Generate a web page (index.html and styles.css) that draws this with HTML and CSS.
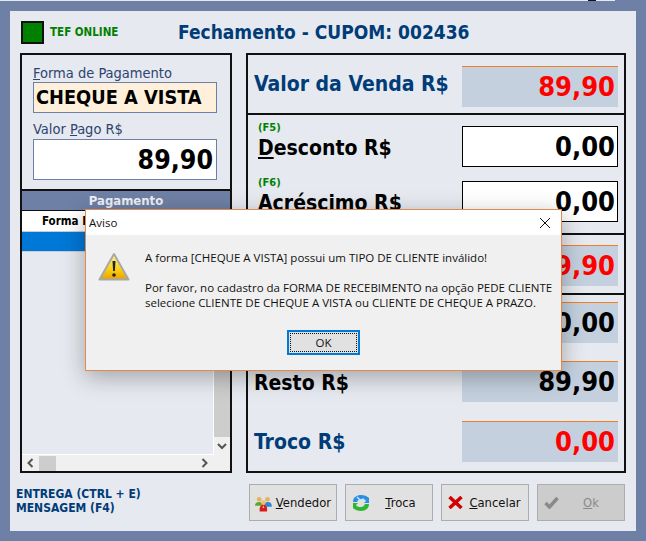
FILE: index.html
```html
<!DOCTYPE html>
<html lang="pt-BR">
<head>
    <meta charset="utf-8">
    <title>Fechamento</title>
    <link rel="stylesheet" href="styles.css">
</head>
<body>
<div class="strip"><span class="strip-mark"></span></div>
<div class="window">
    <header class="top">
        <span class="led"></span>
        <span class="tef">TEF ONLINE</span>
        <span class="title">Fechamento - CUPOM: 002436</span>
    </header>

    <main class="main">
        <section class="left">
            <div class="form">
                <label class="lbl"><u>F</u>orma de Pagamento</label>
                <div class="input-forma">CHEQUE A VISTA</div>
                <label class="lbl lbl-pago">Valor <u>P</u>ago R$</label>
                <div class="input-pago">89,90</div>
            </div>
            <div class="grid-title">Pagamento</div>
            <div class="grid">
                <div class="grid-body">
                    <div class="grid-head">Forma P</div>
                    <div class="grid-sel"></div>
                </div>
                <div class="vbar">
                    <span class="vthumb"></span>
                    <svg class="arrow" width="10" height="8" viewBox="0 0 10 8"><path d="M1 2l4 4 4-4" fill="none" stroke="#555" stroke-width="2"/></svg>
                </div>
                <div class="hbar">
                    <svg class="arrow" width="8" height="10" viewBox="0 0 8 10"><path d="M6.500 1l-4 4 4 4" fill="none" stroke="#555" stroke-width="2"/></svg>
                    <span class="hthumb"></span>
                    <svg class="arrow arrow-right" width="8" height="10" viewBox="0 0 8 10"><path d="M1.500 1l4 4-4 4" fill="none" stroke="#555" stroke-width="2"/></svg>
                </div>
            </div>
        </section>

        <section class="right">
            <div class="block block-venda">
                <div class="row">
                    <span class="name name-blue">Valor da Venda R$</span>
                    <span class="val val-red">89,90</span>
                </div>
            </div>
            <div class="block block-desc">
                <div class="row">
                    <div class="name-wrap"><small>(F5)</small><span class="name"><u>D</u>esconto R$</span></div>
                    <span class="val val-white">0,00</span>
                </div>
                <div class="row">
                    <div class="name-wrap"><small>(F6)</small><span class="name">Acréscimo R$</span></div>
                    <span class="val val-white">0,00</span>
                </div>
            </div>
            <div class="block block-total">
                <div class="row">
                    <span class="name name-blue"></span>
                    <span class="val val-red">89,90</span>
                </div>
            </div>
            <div class="block block-resto">
                <div class="row">
                    <span class="name"></span>
                    <span class="val">0,00</span>
                </div>
                <div class="row">
                    <span class="name name-low">Resto R$</span>
                    <span class="val">89,90</span>
                </div>
                <div class="row row-troco">
                    <span class="name name-blue">Troco R$</span>
                    <span class="val val-red">0,00</span>
                </div>
            </div>
        </section>
    </main>

    <footer class="bottom">
        <div class="hints">ENTREGA (CTRL + E)<br>MENSAGEM (F4)</div>
        <div class="buttons">
            <button class="btn btn-vend">
                <svg width="18" height="18" viewBox="0 0 18 18">
                    <circle cx="4.500" cy="5" r="2.500" fill="#e8b060"/>
                    <path d="M0 12c0-3 2-4 4.500-4S8 9 8 11v1H0z" fill="#5aa832"/>
                    <circle cx="13.500" cy="5" r="2.500" fill="#e8b060"/>
                    <path d="M10 11c0-2 1-3 3.500-3S18 9 18 12v1h-8z" fill="#2f86d8"/>
                    <circle cx="9" cy="8.500" r="2.500" fill="#f0c070"/>
                    <path d="M5 18v-3c0-2 2-4 4-4s4 2 4 4v3z" fill="#d81c1c"/>
                    <path d="M9 11.500l-1 3h2z" fill="#ffd24a"/>
                </svg>
                <span><u>V</u>endedor</span>
            </button>
            <button class="btn btn-spread">
                <svg width="18" height="18" viewBox="0 0 18 18">
                    <path d="M1 8c0-5 4-7 8-7 3 0 6 1 8 3v5h-5l2-2c-1-2-3-2-5-2-2 0-3 1-4 3z" fill="#2a8fe0"/>
                    <path d="M5 3l3 3 4-1" fill="none" stroke="#bfe4ff" stroke-width="1.500"/>
                    <path d="M17 10c0 5-4 7-8 7-3 0-6-1-8-3V9h5l-2 2c1 2 3 2 5 2 2 0 3-1 4-3z" fill="#2fb52f"/>
                </svg>
                <span class="btn-text"><u>T</u>roca</span>
            </button>
            <button class="btn btn-spread">
                <svg width="15" height="13" viewBox="0 0 15 13"><path d="M1.500 1l12 11M13.500 1l-12 11" stroke="#d40000" stroke-width="3.500" fill="none"/></svg>
                <span class="btn-text"><u>C</u>ancelar</span>
            </button>
            <button class="btn btn-spread btn-off">
                <svg width="15" height="13" viewBox="0 0 15 13"><path d="M1.500 7l4 4 8-9" stroke="#8a8a8a" stroke-width="3.500" fill="none"/></svg>
                <span class="btn-text"><u>O</u>k</span>
            </button>
        </div>
    </footer>
</div>

<div class="dialog">
    <div class="dlg-title">
        <span>Aviso</span>
        <svg width="12" height="12" viewBox="0 0 12 12"><path d="M1 1l10 10M11 1L1 11" stroke="#111" stroke-width="1" fill="none"/></svg>
    </div>
    <div class="dlg-body">
        <svg class="warn" width="32" height="30" viewBox="0 0 32 30">
            <defs>
                <linearGradient id="warnfill" x1="0" y1="0" x2="0" y2="1">
                    <stop offset="0" stop-color="#fff3a0"/>
                    <stop offset="0.6" stop-color="#fbcf10"/>
                    <stop offset="1" stop-color="#e8a200"/>
                </linearGradient>
            </defs>
            <path d="M16 2L30.500 27.500H1.500z" fill="url(#warnfill)" stroke="#a8a8a8" stroke-width="2" stroke-linejoin="round"/>
            <path d="M14.500 9h3l-.6 10h-1.800z" fill="#222"/>
            <circle cx="16" cy="23" r="1.800" fill="#222"/>
        </svg>
        <div class="dlg-text">
            <p>A forma [CHEQUE A VISTA] possui um TIPO DE CLIENTE inválido!</p>
            <p>Por favor, no cadastro da FORMA DE RECEBIMENTO na opção PEDE CLIENTE<br>selecione CLIENTE DE CHEQUE A VISTA ou CLIENTE DE CHEQUE A PRAZO.</p>
        </div>
    </div>
    <div class="dlg-foot"><button class="ok"><span>OK</span></button></div>
</div>
</body>
</html>
```

FILE: styles.css
```css
* {
    box-sizing: border-box;
}
html, body {
    margin: 0;
    height: 100%;
}
body {
    background-color: #6e80a5;
    font-family: "DejaVu Sans", Verdana, sans-serif;
    font-stretch: condensed;
    overflow: hidden;
    padding: 0 10px 10px;
}
/* sliver of the window behind, along the very top */
.strip {
    height: 1px;
    width: 615px;
    margin: 0 0 10px -10px;
    background-color: #e6e9ef;
    display: flex;
    justify-content: flex-end;
    padding-right: 19px;
}
.strip-mark {
    width: 8px;
    background-color: #111;
}
.window {
    width: 626px;
    height: 520px;
    background-color: #e6e9ef;
    display: flex;
    flex-direction: column;
}

/* top line */
.top {
    height: 42px;
    display: flex;
    align-items: center;
    padding: 0 0 0 11px;
}
.led {
    width: 23px;
    height: 23px;
    background-color: #008000;
    border: 2px solid #111;
}
.tef {
    margin-left: 6px;
    width: 128px;
    color: #008000;
    font-size: 11.5px;
    font-weight: bold;
}
.title {
    color: #003c78;
    font-size: 19px;
    font-weight: bold;
}

/* main boxes */
.main {
    display: flex;
    gap: 14px;
    padding: 0 10px;
    height: 420px;
}
.left {
    width: 212px;
    border: 2px solid #111;
    display: flex;
    flex-direction: column;
}
.form {
    height: 136px;
    padding: 10px 13px 0 11px;
    border-bottom: 2px solid #111;
    flex: none;
}
.lbl {
    display: block;
    font-family: "DejaVu Sans", sans-serif;
    font-size: 14.5px;
    color: #2c4470;
    line-height: 17px;
}
.lbl-pago {
    margin-top: 8px;
}
.input-forma {
    height: 31px;
    background-color: #fff0dc;
    border: 1px solid #6e80a5;
    font-size: 19.8px;
    font-weight: bold;
    line-height: 29px;
    padding-left: 2px;
    color: #000;
}
.input-pago {
    height: 41px;
    margin-top: 1px;
    background-color: #fff;
    border: 1px solid #6e80a5;
    font-size: 26.5px;
    font-weight: bold;
    line-height: 40px;
    text-align: right;
    padding-right: 3px;
}
.grid-title {
    height: 19px;
    flex: none;
    background-color: #6e80a5;
    color: #eef0f5;
    font-size: 13px;
    font-weight: bold;
    text-align: center;
    line-height: 19px;
}
.grid {
    flex: 1;
    display: grid;
    grid-template-columns: 1fr 16px;
    grid-template-rows: 1fr 16px;
    border-top: 1px solid #111;
}
.grid-body {
    border-right: 1px solid #fff;
    border-bottom: 1px solid #fff;
}
.grid-head {
    height: 21px;
    background-color: #fff;
    border-bottom: 1px solid #ccc;
    padding-left: 20px;
    font-size: 11.5px;
    font-weight: bold;
    line-height: 20px;
}
.grid-sel {
    height: 20px;
    background-color: #0078d7;
    border-bottom: 1px solid #ccc;
}
.vbar {
    background-color: #f0f0f0;
    display: flex;
    flex-direction: column;
    align-items: center;
}
.vthumb {
    width: 100%;
    flex: 1;
    margin-top: 17px;
    background-color: #cdcdcd;
}
.vbar .arrow {
    margin: 5px 0;
}
.hbar {
    grid-column: 1 / 3;
    background-color: #f0f0f0;
    display: flex;
    align-items: center;
    padding: 0 21px 0 4px;
}
.hthumb {
    width: 17px;
    height: 15px;
    margin-left: 5px;
    background-color: #cdcdcd;
}
.arrow-right {
    margin-left: auto;
}

.right {
    width: 380px;
    border: 2px solid #111;
    display: flex;
    flex-direction: column;
}
.block {
    border-bottom: 2px solid #111;
    padding: 0 6px;
    display: flex;
    flex-direction: column;
    flex: none;
}
.block:last-child {
    border-bottom: none;
}
.block-venda {
    height: 60px;
    padding-top: 11px;
}
.block-venda .name {
    margin-bottom: 5px;
}
.block-desc {
    height: 120px;
    padding-top: 11px;
    gap: 14px;
}
.block-total {
    height: 60px;
    padding-top: 10px;
}
.block-resto {
    flex: 1;
    padding-top: 7px;
    gap: 18px;
}
.row {
    display: flex;
    align-items: center;
    justify-content: space-between;
    height: 41px;
}
.row-troco {
    margin-top: 1px;
}
.name {
    font-size: 21px;
    font-weight: bold;
    color: #000;
    line-height: 24px;
}
.name-low {
    margin-top: 2px;
}
.name-blue {
    color: #003c78;
}
.name-wrap {
    display: flex;
    flex-direction: column;
    padding-left: 4px;
    align-self: flex-start;
    margin-top: -5px;
}
.name-wrap small {
    color: #008000;
    font-size: 11px;
    font-weight: bold;
    line-height: 14px;
}
.name-wrap .name {
    margin-top: 1px;
}
.val {
    width: 156px;
    height: 41px;
    background-color: #c4d0de;
    border-top: 1px solid #f08020;
    font-size: 27px;
    font-weight: bold;
    line-height: 40px;
    text-align: right;
    padding-right: 3px;
    color: #000;
}
.val-red {
    color: #ff0000;
}
.val-white {
    background-color: #fff;
    border: 1px solid #000;
    padding-right: 2px;
}

/* bottom line */
.bottom {
    display: flex;
    justify-content: space-between;
    align-items: flex-start;
    padding: 11px 11px 0 6px;
}
.hints {
    color: #003c78;
    font-size: 12px;
    font-weight: bold;
    line-height: 14px;
    padding-top: 3px;
}
.buttons {
    display: flex;
    gap: 8px;
}
.btn {
    width: 88px;
    height: 37px;
    background-color: #e1e1e1;
    border: 1px solid #adadad;
    font-family: "DejaVu Sans", sans-serif;
    font-size: 11.6px;
    color: #111;
    display: flex;
    align-items: center;
    gap: 4px;
    padding: 0 5px;
}
.btn-spread {
    padding-left: 6px;
}
.btn-text {
    flex: 1;
    text-align: center;
}
.btn-off {
    background-color: #cccccc;
    color: #8a8a8a;
}

/* message box */
.dialog {
    position: absolute;
    left: 85px;
    top: 209px;
    width: 477px;
    height: 162px;
    background-color: #f0f0f0;
    border: 1px solid #e08a50;
    box-shadow: 0 6px 22px rgba(0, 0, 0, 0.3);
    font-family: "Open Sans", "Noto Sans", sans-serif;
    font-stretch: normal;
    font-size: 11.5px;
    color: #111;
}
.dlg-title {
    height: 25px;
    background-color: #fff;
    display: flex;
    align-items: center;
    justify-content: space-between;
    padding: 0 10px 0 3px;
}
.dlg-body {
    display: flex;
    padding: 15px 0 0 12px;
    gap: 15px;
}
.warn {
    flex: none;
    margin-top: 2px;
}
.dlg-text p {
    margin: 0 0 15px;
    line-height: 15px;
    white-space: nowrap;
}
.dlg-foot {
    display: flex;
    justify-content: center;
    margin-top: 5px;
}
.ok {
    width: 73px;
    height: 25px;
    padding: 1px;
    border: 2px solid #0078d7;
    background-color: #e1e1e1;
    font: inherit;
    color: #111;
}
.ok span {
    display: block;
    border: 1px dotted #111;
    line-height: 17px;
}
```
